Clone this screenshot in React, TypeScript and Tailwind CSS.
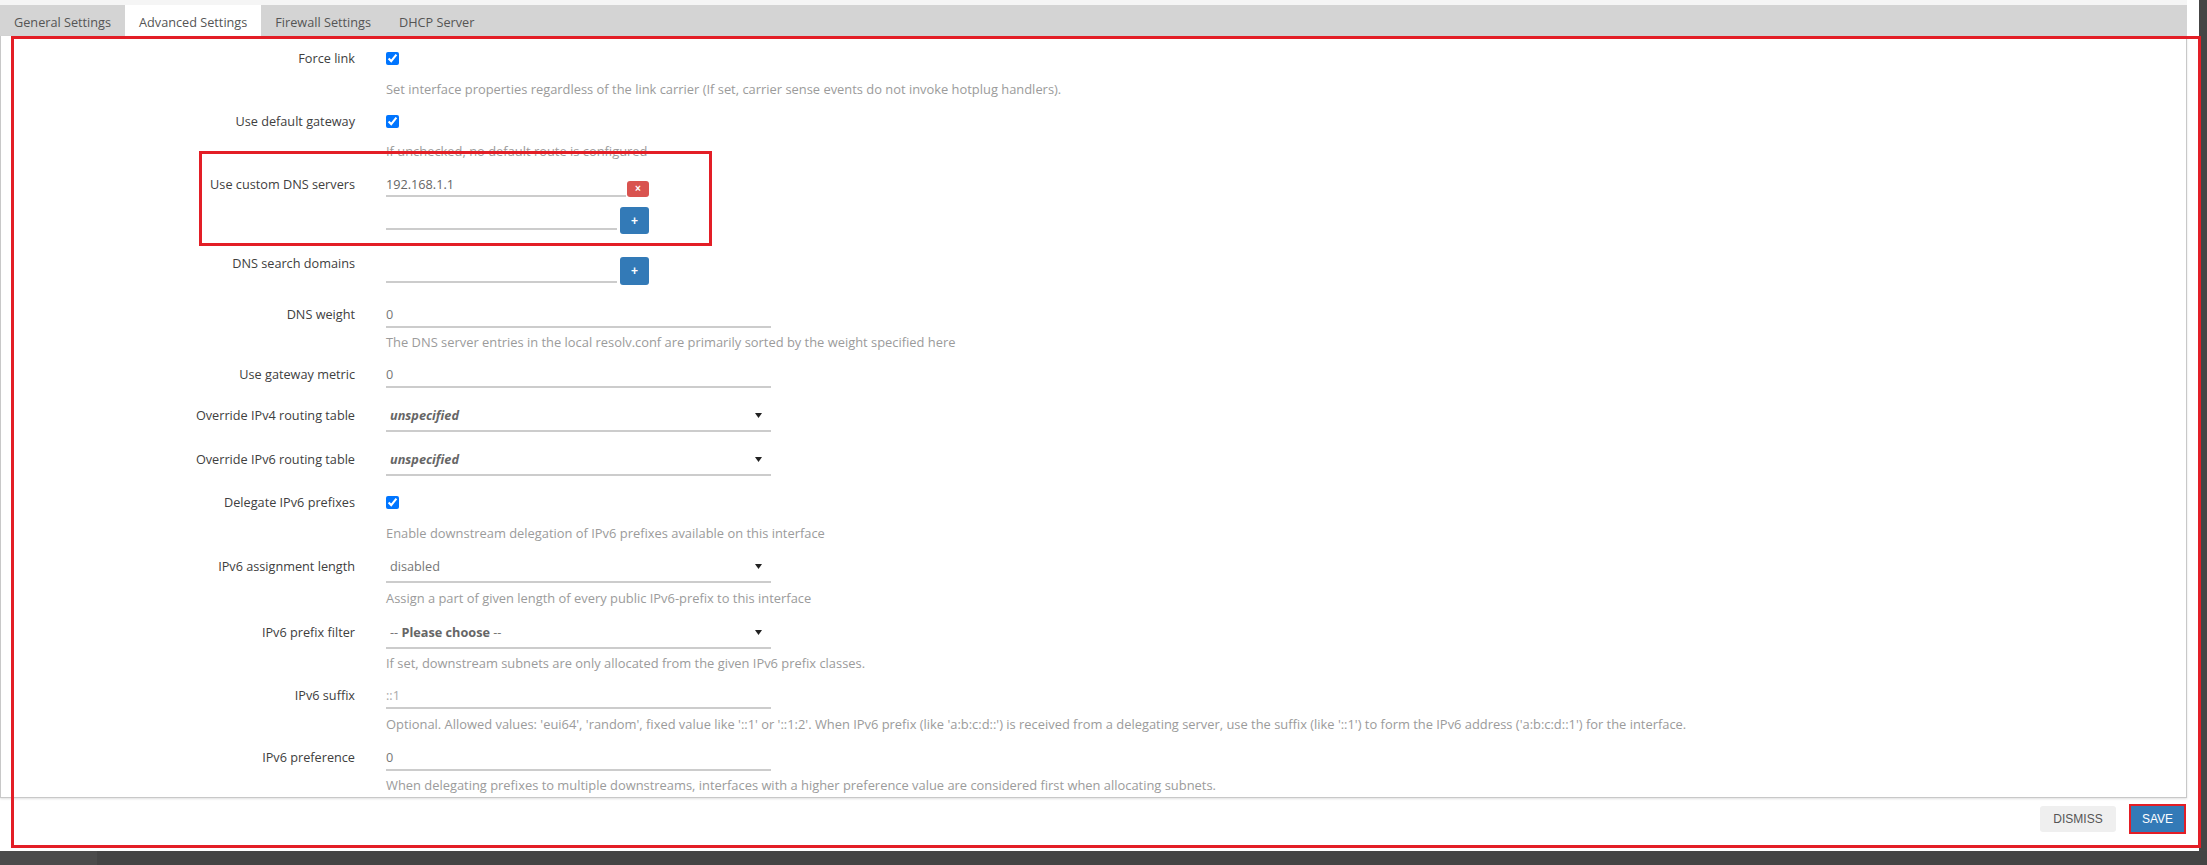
import React from 'react';

type RowProps = {
  label: string;
  className?: string;
  children: React.ReactNode;
};

function Row({ label, className, children }: RowProps) {
  return (
    <div className={`flex ${className ?? ''}`}>
      <div className="w-[354px] shrink-0 text-right leading-[24px] text-[#404040]">{label}</div>
      <div className="ml-[31px] flex flex-col">{children}</div>
    </div>
  );
}

function Desc({ children, className }: { children: React.ReactNode; className?: string }) {
  return (
    <div className={`whitespace-nowrap text-[12.9px] leading-[18px] text-[#9b9b9b] ${className ?? ''}`}>{children}</div>
  );
}

function Check() {
  return (
    <div className="flex h-[24px] items-center">
      <input type="checkbox" defaultChecked className="m-0 h-[13px] w-[13px]" />
    </div>
  );
}

function TextInput({ value, valueClass }: { value?: string; valueClass?: string }) {
  return (
    <div className="h-[26px] w-[385px] border-b-2 border-[#cccccc] leading-[24px]">
      <span className={valueClass ?? 'text-[#777]'}>{value}</span>
    </div>
  );
}

function Select({ children }: { children: React.ReactNode }) {
  return (
    <div className="flex h-[29px] w-[385px] items-start justify-between border-b-2 border-[#cccccc] pl-[4px] pr-[9px] leading-[24px]">
      <span>{children}</span>
      <svg width="7" height="5" viewBox="0 0 7 5" className="mt-[10px]">
        <path d="M0 0h7L3.5 5z" fill="#222" />
      </svg>
    </div>
  );
}

function PlusButton({ className }: { className?: string }) {
  return (
    <div
      className={`ml-[3px] flex w-[29px] items-center justify-center rounded-[3px] bg-[#337ab7] font-['Liberation_Sans',Arial,sans-serif] text-[12px] font-bold text-white ${className ?? ''}`}
    >
      +
    </div>
  );
}

const tabs = ['General Settings', 'Advanced Settings', 'Firewall Settings', 'DHCP Server'];

export default function App() {
  return (
    <div className="relative h-[865px] w-[2207px] overflow-hidden bg-[#444] font-['Open_Sans',Arial,sans-serif] text-[12.7px]">
      <div className="flex h-[851px]">
        <div className="flex w-[2199px] flex-col bg-white">
          <div className="h-[5px] w-[2187px] bg-[#f5f5f5]" />
          <div className="flex h-[31px] w-[2187px] bg-[#d4d4d4]">
            {tabs.map((t, i) => (
              <div
                key={t}
                className={`flex h-[31px] items-center px-[14px] pt-[4px] text-[#555] ${i === 1 ? 'bg-white' : ''}`}
              >
                {t}
              </div>
            ))}
          </div>

          <div className="h-[762px] w-[2187px] border-x border-b border-[#c8c8c8] pt-[10px] shadow-[0_1px_2px_rgba(0,0,0,0.12)]">
            <Row label="Force link">
              <Check />
              <Desc className="mt-[10px]">
                Set interface properties regardless of the link carrier (If set, carrier sense events do not invoke hotplug handlers).
              </Desc>
            </Row>

            <Row label="Use default gateway" className="mt-[11px]">
              <Check />
              <Desc className="mt-[9px]">If unchecked, no default route is configured</Desc>
            </Row>

            <Row label="Use custom DNS servers" className="mt-[12px]">
              <div className="flex h-[25px] items-end">
                <div className="h-[25px] w-[240px] border-b-2 border-[#cccccc] leading-[24px] text-[#666]">192.168.1.1</div>
                <div className="ml-[1px] flex h-[16px] w-[22px] items-center justify-center rounded-[3px] bg-[#d9534f] font-['Liberation_Sans',Arial,sans-serif] text-[10px] font-bold leading-none text-white">
                  ×
                </div>
              </div>
              <div className="mt-[10px] flex items-start">
                <div className="h-[23px] w-[231px] border-b-2 border-[#cccccc]" />
                <PlusButton className="h-[27px]" />
              </div>
            </Row>

            <Row label="DNS search domains" className="mt-[17px]">
              <div className="mt-[6px] flex items-start">
                <div className="h-[26px] w-[231px] border-b-2 border-[#cccccc]" />
                <PlusButton className="h-[28px]" />
              </div>
            </Row>

            <Row label="DNS weight" className="mt-[17px]">
              <TextInput value="0" />
              <Desc className="mt-[5px]">
                The DNS server entries in the local resolv.conf are primarily sorted by the weight specified here
              </Desc>
            </Row>

            <Row label="Use gateway metric" className="mt-[11px]">
              <TextInput value="0" />
            </Row>

            <Row label="Override IPv4 routing table" className="mt-[15px]">
              <Select>
                <span className="font-bold italic text-[#666]">unspecified</span>
              </Select>
            </Row>

            <Row label="Override IPv6 routing table" className="mt-[15px]">
              <Select>
                <span className="font-bold italic text-[#666]">unspecified</span>
              </Select>
            </Row>

            <Row label="Delegate IPv6 prefixes" className="mt-[14px]">
              <Check />
              <Desc className="mt-[10px]">Enable downstream delegation of IPv6 prefixes available on this interface</Desc>
            </Row>

            <Row label="IPv6 assignment length" className="mt-[12px]">
              <Select>
                <span className="text-[#777]">disabled</span>
              </Select>
              <Desc className="mt-[6px]">Assign a part of given length of every public IPv6-prefix to this interface</Desc>
            </Row>

            <Row label="IPv6 prefix filter" className="mt-[13px]">
              <Select>
                <span className="text-[#777]">
                  -- <span className="font-bold text-[#666]">Please choose</span> --
                </span>
              </Select>
              <Desc className="mt-[5px]">
                If set, downstream subnets are only allocated from the given IPv6 prefix classes.
              </Desc>
            </Row>

            <Row label="IPv6 suffix" className="mt-[11px]">
              <TextInput value="::1" valueClass="text-[#aaa]" />
              <Desc className="mt-[6px]">
                Optional. Allowed values: 'eui64', 'random', fixed value like '::1' or '::1:2'. When IPv6 prefix (like
                'a:b:c:d::') is received from a delegating server, use the suffix (like '::1') to form the IPv6 address
                ('a:b:c:d::1') for the interface.
              </Desc>
            </Row>

            <Row label="IPv6 preference" className="mt-[12px]">
              <TextInput value="0" />
              <Desc className="mt-[5px]">
                When delegating prefixes to multiple downstreams, interfaces with a higher preference value are considered
                first when allocating subnets.
              </Desc>
            </Row>
          </div>

          <div className="flex h-[42px] w-[2187px] items-center justify-end gap-[13px] pr-[1px] font-['Liberation_Sans',Arial,sans-serif] text-[12px]">
            <div className="flex h-[26px] w-[76px] items-center justify-center rounded-[3px] bg-[#efefef] text-[#555]">
              DISMISS
            </div>
            <div className="relative flex h-[30px] w-[57px] items-center justify-center rounded-[3px] bg-[#337ab7] text-white">
              SAVE
              <div className="pointer-events-none absolute inset-0 border-2 border-[#e31e26]" />
            </div>
          </div>
        </div>
        <div className="flex-1 bg-[#454545]" />
      </div>
      <div className="flex h-[14px]">
        <div className="w-[97px] bg-[#4b4b4b]" />
        <div className="flex-1 bg-[#444]" />
      </div>

      {/* annotation boxes drawn over the screenshot */}
      <div className="pointer-events-none absolute left-[11px] top-[36px] h-[812px] w-[2190px] border-[3px] border-[#e31e26]" />
      <div className="pointer-events-none absolute left-[199px] top-[151px] h-[95px] w-[513px] border-[3px] border-[#e31e26]" />
    </div>
  );
}
